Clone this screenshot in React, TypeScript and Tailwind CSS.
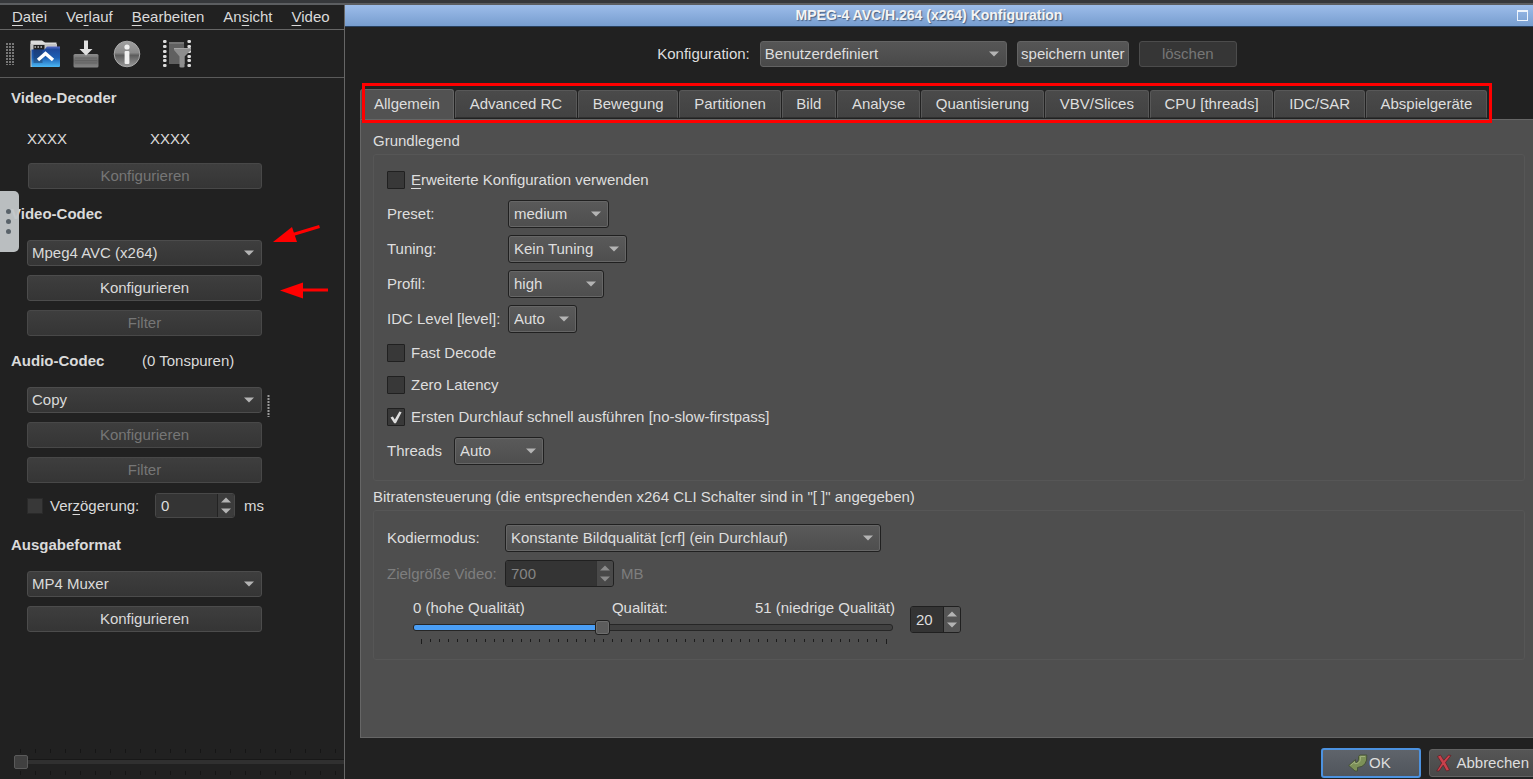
import { ReactNode, useState } from "react"
import clsx from "clsx"

const TABS = [
  "Allgemein",
  "Advanced RC",
  "Bewegung",
  "Partitionen",
  "Bild",
  "Analyse",
  "Quantisierung",
  "VBV/Slices",
  "CPU [threads]",
  "IDC/SAR",
  "Abspielgeräte",
]

const MENU: [string, string, string][] = [
  ["", "D", "atei"],
  ["Ve", "r", "lauf"],
  ["", "B", "earbeiten"],
  ["An", "s", "icht"],
  ["", "V", "ideo"],
]

function Key({ children }: { children: ReactNode }) {
  return <span className="underline decoration-1 underline-offset-[3px]">{children}</span>
}

function Caret({ className }: { className?: string }) {
  return (
    <svg viewBox="0 0 10 6" className={clsx("h-[6px] w-[10px] fill-[#b4b4b4]", className)}>
      <path d="M0 0.5h10L5 5.5z" />
    </svg>
  )
}

// tone "side" is the flat look of the main window, "bar" the dialog header, "pane" sits on the grey page
const selectTone = {
  side: "h-[26px] pl-1 border-[#4c4c4c] bg-linear-to-b from-[#3e3e3e] to-[#353535] text-[#dadada]",
  bar: "h-[26px] pl-1 border-[#636363] bg-linear-to-b from-[#565656] to-[#494949] text-[#dedede]",
  pane: "h-7 pl-[5px] border-[#202020] bg-linear-to-b from-[#5a5a5a] to-[#4e4e4e] text-[#dedede] shadow-[inset_0_0_0_1px_#666]",
}

function Select({
  id,
  label,
  value,
  tone,
  className,
}: {
  id: string
  label?: string
  value: string
  tone: keyof typeof selectTone
  className: string
}) {
  return (
    <div className={clsx("relative", className)}>
      <select
        id={id}
        aria-label={label}
        className={clsx("block w-full appearance-none rounded-[3px] border pr-6 outline-none", selectTone[tone])}
      >
        <option>{value}</option>
      </select>
      <Caret className="pointer-events-none absolute right-2 top-1/2 -translate-y-1/2" />
    </div>
  )
}

function SideButton({ children, disabled }: { children: ReactNode; disabled?: boolean }) {
  return (
    <button
      disabled={disabled}
      className="h-[26px] w-full rounded-[3px] border border-[#4c4c4c] bg-linear-to-b from-[#3e3e3e] to-[#353535] text-[#dadada] disabled:border-[#484848] disabled:text-[#767676]"
    >
      {children}
    </button>
  )
}

function Spin({
  id,
  label,
  value,
  disabled,
  light,
  className,
}: {
  id: string
  label?: string
  value: number
  disabled?: boolean
  light?: boolean
  className: string
}) {
  return (
    <div
      className={clsx(
        "flex overflow-hidden rounded-[3px] border",
        light ? "h-[27px] border-[#202020]" : "h-[25px] border-[#484848]",
        className
      )}
    >
      <input
        id={id}
        aria-label={label}
        type="number"
        defaultValue={value}
        disabled={disabled}
        className="w-0 min-w-0 flex-1 [appearance:textfield] bg-[#343434] pl-[5px] text-[#dedede] outline-none disabled:text-[#858585] [&::-webkit-inner-spin-button]:appearance-none"
      />
      <div
        className={clsx(
          "flex w-[17px] flex-col items-center justify-center gap-[5px] border-l",
          disabled && "border-[#202020] bg-[#464646] opacity-60",
          !disabled && light && "border-[#202020] bg-[#555]",
          !disabled && !light && "border-[#222] bg-[#3c3c3c]"
        )}
      >
        <button aria-label="Erhöhen" disabled={disabled}>
          <Caret className="w-[9px] rotate-180" />
        </button>
        <button aria-label="Verringern" disabled={disabled}>
          <Caret className="w-[9px]" />
        </button>
      </div>
    </div>
  )
}

function Check({ id, checked, children }: { id: string; checked?: boolean; children: ReactNode }) {
  const [on, setOn] = useState(!!checked)
  return (
    <div className="flex items-center gap-[6px]">
      <div className="relative h-[18px] w-[18px]">
        <input
          id={id}
          type="checkbox"
          checked={on}
          onChange={() => setOn(!on)}
          className="block h-[18px] w-[18px] appearance-none rounded-[1px] border border-[#202020] bg-[#383838]"
        />
        {on && (
          <svg viewBox="0 0 18 18" className="pointer-events-none absolute inset-0 h-[18px] w-[18px]">
            <path d="M3.5 9.4l2.4-1 1.9 3.2L12.4 3.6l2.2.6L8.9 15.2H7.2z" fill="#dcdcdc" />
          </svg>
        )}
      </div>
      <label htmlFor={id}>{children}</label>
    </div>
  )
}

function FolderIcon() {
  return (
    <svg viewBox="0 0 30 28" className="h-7 w-[30px]">
      <defs>
        <linearGradient id="folder" x1="0" y1="0" x2="0" y2="1">
          <stop offset="0" stopColor="#5a6cc8" />
          <stop offset="0.15" stopColor="#1e4a9c" />
          <stop offset="0.55" stopColor="#1c5fb4" />
          <stop offset="1" stopColor="#4cb8f4" />
        </linearGradient>
      </defs>
      <path d="M0.5 1.5a1 1 0 0 1 1-1H12l3 2h11.5v8H0.5z" fill="#dcdcdc" />
      <path d="M0.5 4H27v23H0.5z" fill="#c4c4c4" />
      <path d="M3.5 5h11v5h-11z" fill="#222" />
      <path d="M4.5 6H6v2H4.5zM7.5 6H9v2H7.5zM10.5 6H12v2h-1.5z" fill="#999" />
      <path d="M1.5 9.5h13L17 6.5h13V26a1 1 0 0 1-1 1H2.5a1 1 0 0 1-1-1z" fill="url(#folder)" />
      <path d="M3.5 9h9v14h-9z" fill="#1a2a4a" opacity="0.4" />
      <path d="M8 20l7.5-6.5L23 20" fill="none" stroke="#fff" strokeWidth="3.4" />
    </svg>
  )
}

function SaveIcon() {
  return (
    <svg viewBox="0 0 26 28" className="h-7 w-[26px]">
      <defs>
        <linearGradient id="tray" x1="0" y1="0" x2="0" y2="1">
          <stop offset="0" stopColor="#8c8c8c" />
          <stop offset="0.5" stopColor="#6a6a6a" />
          <stop offset="1" stopColor="#858585" />
        </linearGradient>
      </defs>
      <rect x="0.5" y="14" width="25" height="13.5" rx="1.5" fill="url(#tray)" />
      <path d="M2 18h22M2 20.5h22M2 23h22" stroke="#606060" strokeWidth="0.8" />
      <path d="M11 0.5h4V9h4.500L13 15.500 6.500 9H11z" fill="#e0e0e0" />
    </svg>
  )
}

function InfoIcon() {
  return (
    <svg viewBox="0 0 28 28" className="h-7 w-7">
      <defs>
        <linearGradient id="ball" x1="0" y1="0" x2="0" y2="1">
          <stop offset="0" stopColor="#a0a0a0" />
          <stop offset="0.45" stopColor="#8a8a8a" />
          <stop offset="0.55" stopColor="#5c5c5c" />
          <stop offset="1" stopColor="#9a9a9a" />
        </linearGradient>
      </defs>
      <circle cx="14" cy="14" r="12.8" fill="url(#ball)" stroke="#a8a8a8" />
      <circle cx="14" cy="7" r="2.6" fill="#f0f0f0" />
      <rect x="11.6" y="11" width="4.8" height="13" rx="1" fill="#f0f0f0" />
    </svg>
  )
}

function FilterIcon() {
  return (
    <svg viewBox="0 0 30 29" className="h-[29px] w-[30px]">
      <path d="M7 3h15v3H7z" fill="#757575" />
      <path d="M7 5h15l1 20H7z" fill="#606060" />
      {[1, 6, 11, 16, 20, 25].map((y) => (
        <g key={y}>
          <rect x="1" y={y} width="3.6" height="3" rx="1.2" fill="#dcdcdc" />
          <rect x="25.4" y={y} width="3.6" height="3" rx="1.2" fill="#dcdcdc" />
        </g>
      ))}
      <path d="M12 9h17v2l-6.500 6.500V28q-2.500 1-5 0V17.500L12 11z" fill="#8e8e8e" />
      <path d="M12 9.500h17" stroke="#a6a6a6" />
    </svg>
  )
}

function EnterIcon() {
  return (
    <svg viewBox="0 0 20 19" className="h-[19px] w-5">
      <path d="M0.7 11.500L7.500 5.500v3q3.500 0 3-6l1.300-1.500h7q1 11.500-9.300 12.500v3.500H7z" fill="#7d9158" stroke="#47533a" />
      <path d="M2.500 11.300l4.300-3.600v2q6.500.3 5.700-7.200h4.500" fill="none" stroke="#a0b17c" />
    </svg>
  )
}

function CrossIcon() {
  return (
    <svg viewBox="0 0 16 18" className="h-[18px] w-4">
      <path
        d="M1.500 2.500l3-1.500 3.300 5.300L12.500 1l2.500.5-5.500 7 4 7.500-3 1-3.300-5.800L3 17H0.700l5-8z"
        fill="#c9414c"
        stroke="#5c1c22"
        strokeWidth="0.7"
      />
    </svg>
  )
}

function Ticks({ count, className, color }: { count: number; className?: string; color: string }) {
  return (
    <div className={clsx("flex overflow-hidden", className)}>
      {Array.from({ length: count }, (_, i) => (
        <i key={i} className={clsx("w-px shrink-0", color)} />
      ))}
    </div>
  )
}

function Sidebar() {
  return (
    <aside className="relative flex w-[345px] shrink-0 flex-col border-r border-[#666] bg-[#212121] text-[#dadada]">
      <nav className="flex h-[25px] items-center gap-[19px] border-b border-[#666] pl-3">
        {MENU.map(([a, b, c]) => (
          <button key={b} className="leading-5">
            {a}
            <Key>{b}</Key>
            {c}
          </button>
        ))}
      </nav>
      <div className="flex h-12 items-center border-b border-[#5a5a5a] pl-[6px]">
        <svg viewBox="0 0 8 22" className="h-[22px] w-2">
          {[1, 4, 7].map((x) => (
            <path key={x} d={`M${x} 0v22`} stroke="#777" strokeWidth="2" strokeDasharray="2 1" />
          ))}
        </svg>
        <button aria-label="Öffnen" className="ml-4">
          <FolderIcon />
        </button>
        <button aria-label="Speichern" className="ml-[13px]">
          <SaveIcon />
        </button>
        <button aria-label="Informationen" className="ml-[14px]">
          <InfoIcon />
        </button>
        <button aria-label="Filter" className="ml-[21px]">
          <FilterIcon />
        </button>
      </div>

      <div className="flex flex-col pl-[11px] pt-[10px] leading-5">
        <h2 className="font-bold">Video-Decoder</h2>
        <div className="mt-[21px] flex pl-4">
          <span className="w-[123px]">XXXX</span>
          <span>XXXX</span>
        </div>
        <div className="ml-[17px] mt-[14px] w-[234px]">
          <SideButton disabled>Konfigurieren</SideButton>
        </div>

        <h2 className="mt-[15px] font-bold">Video-Codec</h2>
        <div className="ml-4 mt-4 flex w-[235px] flex-col gap-[9px]">
          <Select id="vcodec" label="Video-Codec" tone="side" value="Mpeg4 AVC (x264)" className="w-full" />
          <SideButton>Konfigurieren</SideButton>
          <SideButton disabled>Filter</SideButton>
        </div>

        <div className="mt-[15px] flex">
          <h2 className="w-[131px] font-bold">Audio-Codec</h2>
          <span>(0 Tonspuren)</span>
        </div>
        <div className="ml-4 mt-4 flex gap-[5px]">
          <div className="flex w-[235px] flex-col gap-[9px]">
            <Select id="acodec" label="Audio-Codec" tone="side" value="Copy" className="w-full" />
            <SideButton disabled>Konfigurieren</SideButton>
            <SideButton disabled>Filter</SideButton>
          </div>
          <svg viewBox="0 0 3 22" className="mt-2 h-[22px] w-[3px]">
            <path d="M1.5 0v22" stroke="#999" strokeWidth="2" strokeDasharray="2 1" />
          </svg>
        </div>

        <div className="ml-4 mt-[10px] flex items-center">
          <input
            id="delay"
            type="checkbox"
            className="h-4 w-4 appearance-none border border-[#2a2a2a] bg-[#383838]"
          />
          <label htmlFor="delay" className="ml-[7px] w-[105px]">
            Ver<Key>z</Key>ögerung:
          </label>
          <Spin id="delayMs" label="Verzögerung in ms" value={0} className="w-20" />
          <span className="ml-[9px]">ms</span>
        </div>

        <h2 className="mt-[17px] font-bold">Ausgabeformat</h2>
        <div className="ml-4 mt-4 flex w-[235px] flex-col gap-[9px]">
          <Select id="muxer" label="Ausgabeformat" tone="side" value="MP4 Muxer" className="w-full" />
          <SideButton>Konfigurieren</SideButton>
        </div>
      </div>

      <div className="mt-auto flex flex-col pb-1">
        <Ticks count={22} className="gap-[14px] pl-5" color="h-1 bg-[#161616]" />
        <input
          type="range"
          aria-label="Position"
          min={0}
          max={100}
          defaultValue={0}
          className="ml-[14px] h-[18px] appearance-none bg-transparent [&::-webkit-slider-runnable-track]:h-1 [&::-webkit-slider-runnable-track]:bg-[#303030] [&::-webkit-slider-runnable-track]:shadow-[0_-1px_0_#181818] [&::-webkit-slider-thumb]:-mt-[5px] [&::-webkit-slider-thumb]:h-[14px] [&::-webkit-slider-thumb]:w-[14px] [&::-webkit-slider-thumb]:appearance-none [&::-webkit-slider-thumb]:rounded-[2px] [&::-webkit-slider-thumb]:border [&::-webkit-slider-thumb]:border-[#5a5a5a] [&::-webkit-slider-thumb]:bg-[#404040]"
        />
        <Ticks count={22} className="gap-[14px] pl-5" color="h-1 bg-[#161616]" />
      </div>

      {/* pull-out handle over the left edge */}
      <button
        aria-label="Leiste öffnen"
        className="absolute left-0 top-[186px] flex h-[61px] w-[19px] flex-col items-center justify-center gap-[5px] rounded-r-[5px] bg-[#c3c7c9]/95 pr-[2px]"
      >
        <i className="h-[5px] w-[5px] rounded-full bg-[#596269]" />
        <i className="h-[5px] w-[5px] rounded-full bg-[#596269]" />
        <i className="h-[5px] w-[5px] rounded-full bg-[#596269]" />
      </button>

      <svg viewBox="0 0 60 80" className="pointer-events-none absolute left-[270px] top-[215px] h-20 w-[60px]">
        <path d="M3 22l19-15 5 15z" fill="#f00" />
        <path d="M23 14.5L49.5 6.5" stroke="#f00" strokeWidth="3" />
        <path d="M10 70.5l23-8v16z" fill="#f00" />
        <path d="M32 70h26" stroke="#f00" strokeWidth="3" />
      </svg>
    </aside>
  )
}

function Group({ title, className, children }: { title: string; className?: string; children: ReactNode }) {
  return (
    <fieldset className={className}>
      <legend className="float-left w-full leading-5">{title}</legend>
      <div className="clear-both pt-[3px]">
        <div className="flex flex-col items-start rounded-[3px] border border-[#565656] bg-[#4e4e4e] pl-[13px]">
          {children}
        </div>
      </div>
    </fieldset>
  )
}

const ROWS = [
  { id: "preset", label: "Preset:", value: "medium", width: "w-[101px]" },
  { id: "tuning", label: "Tuning:", value: "Kein Tuning", width: "w-[119px]" },
  { id: "profil", label: "Profil:", value: "high", width: "w-24" },
  { id: "level", label: "IDC Level [level]:", value: "Auto", width: "w-[69px]" },
]

function GeneralPage() {
  const [quality, setQuality] = useState(20)
  const fill = `${(quality / 51) * 100}%`

  return (
    <div className="flex flex-1 flex-col border-b border-l border-t border-[#666] bg-[#4f4f4f] pl-3 pr-2 pt-[11px]">
      <Group title="Grundlegend">
        <div className="flex h-[325px] flex-col items-start pt-[15px] leading-5">
          <Check id="advanced">
            <Key>E</Key>rweiterte Konfiguration verwenden
          </Check>
          <div className="mt-[10px] flex flex-col items-start gap-[7px]">
            {ROWS.map((r) => (
              <div key={r.id} className="flex items-center">
                <label htmlFor={r.id} className="w-[121px]">
                  {r.label}
                </label>
                <Select id={r.id} value={r.value} tone="pane" className={r.width} />
              </div>
            ))}
          </div>
          <div className="mt-[10px] flex flex-col gap-3">
            <Check id="fast">Fast Decode</Check>
            <Check id="latency">Zero Latency</Check>
            <Check id="firstpass" checked>
              Ersten Durchlauf schnell ausführen [no-slow-firstpass]
            </Check>
          </div>
          <div className="mt-[10px] flex items-center">
            <label htmlFor="threads" className="w-[67px]">
              Threads
            </label>
            <Select id="threads" value="Auto" tone="pane" className="w-[90px]" />
          </div>
        </div>
      </Group>

      <Group
        title={'Bitratensteuerung (die entsprechenden x264 CLI Schalter sind in "[ ]" angegeben)'}
        className="mt-[6px]"
      >
        <div className="flex h-[148px] flex-col items-start pt-[13px] leading-5">
          <div className="flex items-center">
            <label htmlFor="mode" className="w-[118px]">
              Kodiermodus:
            </label>
            <Select
              id="mode"
              value="Konstante Bildqualität [crf] (ein Durchlauf)"
              tone="pane"
              className="w-[376px]"
            />
          </div>
          <div className="mt-2 flex items-center text-[#7e7e7e]">
            <label htmlFor="size" className="w-[118px]">
              Zielgröße Video:
            </label>
            <Spin id="size" value={700} disabled light className="w-[109px]" />
            <span className="ml-[7px]">MB</span>
          </div>
          <div className="mt-[11px] flex items-start pl-[26px]">
            <div className="flex w-[482px] flex-col">
              <div className="flex justify-between">
                <span>0 (hohe Qualität)</span>
                <label htmlFor="quality">Qualität:</label>
                <span>51 (niedrige Qualität)</span>
              </div>
              <div className="relative mt-px flex h-4 w-[480px] items-center">
                <div className="absolute inset-x-0 h-[7px] rounded-[3px] border border-[#262626] bg-[#404040]">
                  <div className="h-full rounded-l-[2px] bg-[#4a9ef5]" style={{ width: fill }} />
                </div>
                <input
                  id="quality"
                  type="range"
                  min={0}
                  max={51}
                  value={quality}
                  onChange={(e) => setQuality(Number(e.target.value))}
                  className="relative w-full appearance-none bg-transparent [&::-webkit-slider-thumb]:h-[15px] [&::-webkit-slider-thumb]:w-[15px] [&::-webkit-slider-thumb]:appearance-none [&::-webkit-slider-thumb]:rounded-[3px] [&::-webkit-slider-thumb]:border [&::-webkit-slider-thumb]:border-[#202020] [&::-webkit-slider-thumb]:bg-[#5c5c5c] [&::-webkit-slider-thumb]:shadow-[inset_0_0_0_1px_#6e6e6e]"
                />
              </div>
              <Ticks
                count={52}
                className="mt-1 justify-between px-2"
                color="h-[3px] bg-[#1c1c1c] first:h-[5px] last:h-[5px]"
              />
            </div>
            <div className="ml-[15px] mt-2">
              <Spin id="qualityValue" label="Qualität" value={quality} light className="w-[51px]" />
            </div>
          </div>
        </div>
      </Group>
    </div>
  )
}

export default function App() {
  const [tab, setTab] = useState(0)

  return (
    <div className="flex min-h-screen flex-col overflow-hidden bg-[#212121] font-['Liberation_Sans',Arial,sans-serif] text-[15px] text-[#dedede]">
      <div className="h-[5px] border-b-2 border-[#5c5e61] bg-[#36383b]" />
      <div className="flex flex-1">
        <Sidebar />

        <main className="flex min-w-0 flex-1 flex-col">
          <header className="flex h-[22px] items-center border-b border-[#27405f] bg-linear-to-b from-[#9dbdea] to-[#779dcf] pr-[5px]">
            <h1 className="flex-1 pb-[2px] pr-1 text-center text-sm font-bold leading-4 text-[#f4f4f4] [text-shadow:1px_1px_1px_#4a6080]">
              MPEG-4 AVC/H.264 (x264) Konfiguration
            </h1>
            <button
              aria-label="Maximieren"
              className="h-[11px] w-[11px] border border-t-2 border-[#eef4fc]"
            />
          </header>

          <div className="mt-[14px] flex items-center justify-center pl-4">
            <label htmlFor="config">Konfiguration:</label>
            <Select id="config" value="Benutzerdefiniert" tone="bar" className="ml-[10px] w-[247px]" />
            <button className="ml-[10px] h-[26px] w-28 whitespace-nowrap rounded-[3px] border border-[#636363] bg-linear-to-b from-[#565656] to-[#494949]">
              speichern unter
            </button>
            <button
              disabled
              className="ml-[10px] h-[26px] w-[98px] rounded-[3px] border border-[#4c4c4c] bg-[#363636] text-[#767676]"
            >
              löschen
            </button>
          </div>

          <div className="flex flex-1 flex-col pl-[15px]">
            <div className="relative mt-[22px] flex h-[30px] w-[1127px] max-w-full items-end" role="tablist">
              {TABS.map((t, i) => (
                <button
                  key={t}
                  role="tab"
                  aria-selected={i === tab}
                  onClick={() => setTab(i)}
                  className={clsx(
                    "whitespace-nowrap rounded-t-[3px] border px-[13px]",
                    i === tab
                      ? "h-[30px] border-[#666] border-b-transparent bg-[#525252]"
                      : "mb-px ml-px h-7 grow border-[#585858] border-b-[#303030] bg-linear-to-b from-[#4a4a4a] to-[#424242]"
                  )}
                >
                  {t}
                </button>
              ))}
              <div className="pointer-events-none absolute -bottom-1 -right-[5px] -top-[6px] left-[2px] border-[3px] border-[#f00]" />
            </div>
            <GeneralPage />
          </div>

          <footer className="flex h-[41px] items-center justify-end gap-2 overflow-hidden pt-[9px]">
            <button className="flex h-[30px] w-[100px] items-center justify-center gap-px rounded-[3px] border-2 border-[#4c92e0] bg-linear-to-b from-[#5f646b] to-[#50555c] pr-1">
              <EnterIcon />
              OK
            </button>
            <button className="-mr-[3px] flex h-7 items-center gap-1 rounded-[3px] border border-[#636363] bg-linear-to-b from-[#565656] to-[#494949] px-[6px]">
              <CrossIcon />
              Abbrechen
            </button>
          </footer>
        </main>
      </div>
    </div>
  )
}
